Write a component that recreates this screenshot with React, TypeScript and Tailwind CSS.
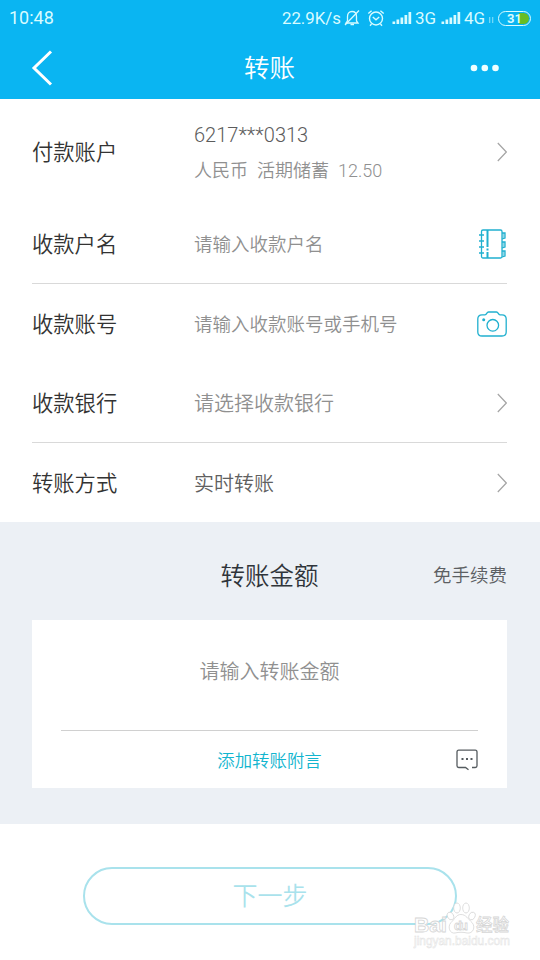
import type { ReactNode } from "react";

const latin = "font-['Roboto','Noto_Sans_CJK_SC',sans-serif]";

function Signal() {
  return (
    <svg width="20" height="14" viewBox="0 0 20 14" fill="currentColor" className="shrink-0">
      <rect x="0.500" y="10.500" width="2.700" height="2.500" />
      <rect x="4.500" y="8.500" width="2.700" height="4.500" />
      <rect x="8.500" y="6.500" width="2.700" height="6.500" />
      <rect x="12.500" y="4" width="2.700" height="9" />
      <rect x="16.500" y="1" width="2.700" height="12" />
    </svg>
  );
}

function BellOff() {
  return (
    <svg width="16" height="18" viewBox="0 0 16 18" fill="none" stroke="currentColor" strokeWidth="1.300" className="shrink-0">
      <path d="M3.500 12V7.500C3.500 4.500 5 2.500 8 2.500S12.500 4.500 12.500 7.500V12L14 14H2L3.500 12" />
      <path d="M15 1.500L1 16M6.500 15.500h3.500" />
    </svg>
  );
}

function Alarm() {
  return (
    <svg width="18" height="18" viewBox="0 0 18 18" fill="none" stroke="currentColor" strokeWidth="1.400" className="shrink-0">
      <circle cx="9" cy="9.500" r="6.500" />
      <path d="M5.800 8L9 10.800L12.200 8M1.300 4.500L4.600 1.700M16.700 4.500L13.400 1.700M4.500 15L3 16.700M13.500 15L15 16.700" />
    </svg>
  );
}

function Chevron() {
  return (
    <svg width="10" height="20" viewBox="0 0 10 20" fill="none" stroke="#a5a5a5" strokeWidth="1.200">
      <path d="M.8 1L9.300 10L.8 19" />
    </svg>
  );
}

function Notebook() {
  return (
    <svg width="30" height="32" viewBox="0 0 30 32" fill="none" stroke="#20b0cf" strokeWidth="1.300">
      <rect x="4.500" y="2" width="20.500" height="28" rx="1.500" />
      <path d="M10.500 2V30" strokeWidth="2" strokeDasharray="17 1.500 2 1.500" />
      <path d="M2 7h5M2 13h5M2 19h5M2 25h5" />
      <path d="M25 5h3v5l-3 1M25 14h3v5l-3 1M25 23h3v5l-3 1" />
      <path d="M26.500 5v5M26.500 14v5M26.500 23v5" strokeWidth="2" opacity=".5" />
    </svg>
  );
}

function Camera() {
  return (
    <svg width="30" height="26" viewBox="0 0 30 26" fill="none" stroke="#20b0cf" strokeWidth="1.300">
      <path d="M5 3.800H8C10 3.800 9.500 1 11.500 1H19.500C21.500 1 21 3.800 23 3.800H25Q29.200 3.800 29.200 8V21Q29.200 25 25 25H5Q.8 25 .8 21V8Q.8 3.800 5 3.800Z" />
      <circle cx="15.800" cy="14.300" r="5.800" />
      <circle cx="6.700" cy="8.800" r="1.500" fill="#20b0cf" stroke="none" />
    </svg>
  );
}

function Message() {
  return (
    <svg width="22" height="22" viewBox="0 0 22 22" fill="none" stroke="#555b5f" strokeWidth="1.300">
      <path d="M16 18.500H19.300Q21 18.500 21 16.800V3Q21 1.200 19.300 1.200H2.700Q1 1.200 1 3V16.800Q1 18.500 2.700 18.500H9.500L12.500 20.800" />
      <path d="M5.500 10h2M10 10h2M14.500 10h2" strokeWidth="1.800" />
    </svg>
  );
}

type RowProps = { label: string; icon: ReactNode; children: ReactNode; className: string };

function Row({ label, icon, children, className }: RowProps) {
  return (
    <div className={`ml-8 mr-[33px] flex items-center ${className}`}>
      <div className="w-[162px] shrink-0 pb-0.5 text-[21.300px] text-[#333]">{label}</div>
      <div className="grow whitespace-nowrap">{children}</div>
      <div className="flex shrink-0">{icon}</div>
    </div>
  );
}

function Watermark() {
  return (
    <svg width="100" height="50" viewBox="0 0 100 50" className="absolute left-[413px] top-[899px]" fill="#ffffff" stroke="#d6d6d6" strokeWidth=".8">
      <ellipse cx="37.500" cy="17" rx="3" ry="4" transform="rotate(-25 37.500 17)" />
      <ellipse cx="44" cy="9" rx="3.300" ry="5" />
      <ellipse cx="53" cy="9" rx="3.300" ry="5" />
      <ellipse cx="59" cy="17" rx="3" ry="4" transform="rotate(25 59 17)" />
      <path d="M48 15.500C43 15.500 42 20 38 23.500C34 28 37 35 42 34C46 33 50 33 54 34C60 35 63 28 59 23.500C55 20 53 15.500 48 15.500Z" />
      <g className="font-['Liberation_Sans',sans-serif] font-bold">
        <text x="1" y="33" fontSize="21" textLength="33" lengthAdjust="spacingAndGlyphs">Bai</text>
        <text x="41" y="31" fontSize="13" textLength="14">du</text>
      </g>
      <text x="63" y="32" fontSize="17.500" textLength="33" lengthAdjust="spacingAndGlyphs" className="font-['Noto_Sans_CJK_SC',sans-serif] font-medium">经验</text>
      <text x="1" y="46" fontSize="12" textLength="96" lengthAdjust="spacingAndGlyphs" strokeWidth=".5" stroke="#e2e2e2" className="font-['Liberation_Sans',sans-serif]">jingyan.baidu.com</text>
    </svg>
  );
}

export default function App() {
  return (
    <div className="relative flex h-[960px] w-[540px] flex-col overflow-hidden bg-white font-['Noto_Sans_CJK_SC',sans-serif] font-[350] leading-none">
      <header className="h-[99px] shrink-0 bg-[#0ab5f2] text-white">
        <div className={`flex h-9 items-center pl-[9px] pr-[9px] text-[17px] text-[#d8fbff] ${latin} font-normal`}>
          <span className="w-[273px] text-[18px]">10:48</span>
          <span className="w-[62px] text-[16.800px]">22.9K/s</span>
          <BellOff />
          <span className="ml-[7px] flex"><Alarm /></span>
          <span className="ml-[7px] flex"><Signal /></span>
          <span className="ml-[3px] w-[26px]">3G</span>
          <Signal />
          <span className="ml-[3px] w-[25px]">4G</span>
          <svg width="5" height="6" className="mt-1 shrink-0" fill="currentColor" opacity=".5">
            <path d="M0 0h1.300v6H0zM3 0h1.300v6H3z" />
          </svg>
          <div className="ml-auto flex h-[15px] w-[33px] shrink-0 rounded-full border-[1.500px] border-[#d8fbff] p-px">
            <div className="flex w-full items-center justify-center rounded-full bg-linear-to-r from-transparent from-66% to-[#67bd25] to-66% text-[13px] font-bold">31</div>
          </div>
        </div>
        <div className="flex h-[63px] items-center justify-between pl-[31px] pr-[41px]">
          <svg width="24" height="36" viewBox="0 0 24 36" fill="none" stroke="white" strokeWidth="3">
            <path d="M20 1.500L3 18L20 34.500" />
          </svg>
          <h1 className="ml-[14px] pb-[3px] text-[25.500px]">转账</h1>
          <svg width="29" height="8" fill="#f0ffff">
            <circle cx="4" cy="4" r="3.300" />
            <circle cx="14.800" cy="4" r="3.300" />
            <circle cx="25.500" cy="4" r="3.300" />
          </svg>
        </div>
      </header>
      <main className="flex grow flex-col">
        <Row label="付款账户" icon={<Chevron />} className="h-[105px]">
          <div className="flex flex-col gap-[17px] pt-0.5">
            <div className={`text-[20px] text-[#5c5c5c] ${latin}`}>6217***0313</div>
            <div className={`flex gap-[9px] text-[18px] text-[#909090] ${latin}`}>
              <span>人民币</span><span>活期储蓄</span><span>12.50</span>
            </div>
          </div>
        </Row>
        <Row label="收款户名" icon={<Notebook />} className="h-20 border-b border-[#d9d9d9] text-[18.500px] text-[#909090]">请输入收款户名</Row>
        <Row label="收款账号" icon={<Camera />} className="h-[79px] text-[18.500px] text-[#909090]">请输入收款账号或手机号</Row>
        <Row label="收款银行" icon={<Chevron />} className="h-20 border-b border-[#d9d9d9] text-[20px] text-[#909090]">请选择收款银行</Row>
        <Row label="转账方式" icon={<Chevron />} className="h-[79px] text-[20px] text-[#606060]">实时转账</Row>
        <section className="h-[302px] bg-[#ecf0f5] pl-8 pr-[33px]">
          <div className="grid h-[98px] grid-cols-[1fr_auto_1fr] items-center pt-2">
            <h2 className="col-start-2 text-[24.500px] text-[#2f343a]">转账金额</h2>
            <span className="justify-self-end pb-px text-[18.500px] text-[#5c5f63]">免手续费</span>
          </div>
          <div className="flex h-[168px] flex-col bg-white px-[29px]">
            <div className="flex h-[111px] items-center justify-center border-b border-[#d0d0d0] pb-2 text-[20px] text-[#909090]">请输入转账金额</div>
            <div className="grid grow grid-cols-[1fr_auto_1fr] items-center">
              <span className="col-start-2 text-[17.400px] text-[#12b5cf]">添加转账附言</span>
              <span className="justify-self-end"><Message /></span>
            </div>
          </div>
        </section>
        <button className="ml-[83px] mt-[43px] h-[58px] w-[374px] rounded-full border-2 border-[#a9e2ec] pb-1 text-[25px] text-[#a9e2ec]">下一步</button>
      </main>
      <Watermark />
    </div>
  );
}
